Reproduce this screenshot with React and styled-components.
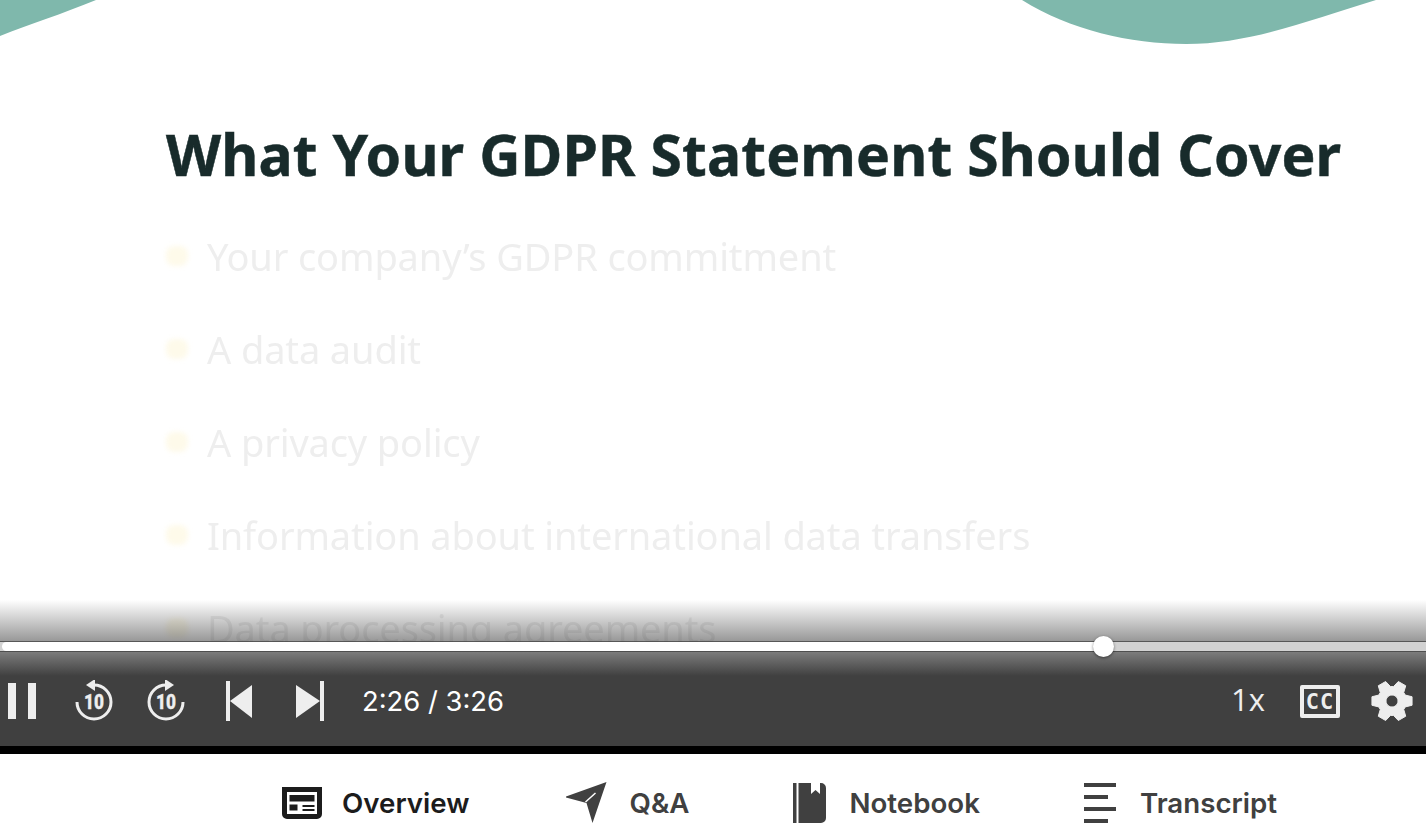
import styled, { createGlobalStyle } from "styled-components";

const GlobalStyle = createGlobalStyle`
  html, body {
    margin: 0;
    padding: 0;
    background: #fff;
    overflow: hidden;
  }
  * {
    box-sizing: border-box;
  }
`;

const Page = styled.div`
  width: 1426px;
  height: 832px;
  display: flex;
  flex-direction: column;
  overflow: hidden;
  font-family: Inter, "Liberation Sans", sans-serif;
`;

const Player = styled.div`
  position: relative;
  height: 746px;
  flex-shrink: 0;
  overflow: hidden;
  background: #fff;
`;

const Wave = styled.svg`
  position: absolute;
  top: 0;
  left: 0;
  pointer-events: none;
`;

const Slide = styled.div`
  padding: 119px 0 0 166px;
  filter: blur(0.7px);
`;

const SlideTitle = styled.h1`
  margin: 0 0 41px;
  font-family: "Noto Sans", sans-serif;
  font-size: 57px;
  line-height: 70px;
  font-weight: 700;
  letter-spacing: 0.15px;
  color: #182b2b;
  white-space: nowrap;
  -webkit-text-stroke: 0.5px #182b2b;
`;

const BulletList = styled.ul`
  margin: 0;
  padding: 0;
  list-style: none;
  display: flex;
  flex-direction: column;
  gap: 41px;
  filter: blur(0.5px);
`;

const Bullet = styled.li`
  display: flex;
  align-items: center;
  gap: 19px;
  height: 52px;
  font-family: "Noto Sans", sans-serif;
  font-size: 38px;
  letter-spacing: -0.13px;
  color: #eeeeee;
  white-space: nowrap;

  &::before {
    content: "";
    width: 22px;
    height: 20px;
    border-radius: 8px;
    background: #fefaea;
    filter: blur(2.5px);
  }
`;

const Overlay = styled.div`
  position: absolute;
  left: 0;
  right: 0;
  bottom: 0;
  height: 146px;
  display: flex;
  flex-direction: column;
  background: linear-gradient(to bottom, rgba(64, 64, 64, 0) 0, #404040 76px);
`;

const Progress = styled.div`
  position: relative;
  height: 9px;
  margin-top: 42px;
  margin-bottom: 5px;
  background: #d2d2d2;
  box-shadow: 0 0 0 1px rgba(60, 60, 60, 0.7);
`;

const ProgressFill = styled.div`
  height: 100%;
  margin-left: 2px;
  width: ${(p) => p.$value}px;
  background: #fff;
  border-radius: 5px 0 0 5px;
`;

const Thumb = styled.div`
  position: absolute;
  top: -6px;
  left: ${(p) => p.$value - 10}px;
  width: 21px;
  height: 21px;
  border-radius: 50%;
  background: #fff;
  box-shadow: 0 1px 3px rgba(0, 0, 0, 0.5);
`;

const ControlRow = styled.div`
  height: 90px;
  display: flex;
  align-items: center;
  justify-content: space-between;
  padding-right: 12px;
`;

const ControlGroup = styled.div`
  display: flex;
  align-items: center;
  gap: 28px;
`;

const ControlSlot = styled.div`
  width: 44px;
  height: 44px;
  display: flex;
  align-items: center;
  justify-content: center;
  color: #eeeeee;
  flex-shrink: 0;
`;

const TimeLabel = styled.span`
  margin-left: 2px;
  font-size: 27.4px;
  color: #fff;
  white-space: nowrap;
`;

const SpeedLabel = styled.span`
  padding-bottom: 5px;
  font-family: "Open Sans", sans-serif;
  font-size: 31px;
  color: #eeeeee;
`;

const CcBadge = styled.span`
  width: 40px;
  height: 33px;
  flex-shrink: 0;
  display: flex;
  align-items: center;
  justify-content: center;
  border: 4px solid #eeeeee;
  border-radius: 2px;
  font-family: "DejaVu Sans Mono", monospace;
  font-size: 22px;
  font-weight: 700;
  letter-spacing: 1px;
  color: #eeeeee;
`;

const BlackStrip = styled.div`
  height: 8px;
  flex-shrink: 0;
  background: #000;
`;

const TabRow = styled.nav`
  flex: 1;
  display: flex;
  align-items: center;
  gap: 100px;
  padding: 20px 0 0 282px;
  background: #fff;
`;

const Tab = styled.div`
  display: flex;
  align-items: center;
  gap: 20px;
  font-size: 27.7px;
  font-weight: 600;
  white-space: nowrap;
  color: ${(p) => (p.$active ? "#1c1c1c" : "#404040")};
`;

const TabIcon = styled.div`
  width: 40px;
  height: 42px;
  display: flex;
  align-items: center;
  justify-content: center;
  flex-shrink: 0;

  svg {
    flex-shrink: 0;
  }
`;

const PauseIcon = () => (
  <svg width="28" height="36" viewBox="0 0 28 36" fill="currentColor">
    <rect x="0" y="0" width="8" height="36" />
    <rect x="20" y="0" width="8" height="36" />
  </svg>
);

const SkipTenIcon = ({ forward }) => (
  <svg width="38" height="42" viewBox="0 1 38 42">
    <g transform={forward ? "translate(38 0) scale(-1 1)" : undefined}>
      <path
        d="M2 23a17 17 0 1 0 17-17"
        fill="none"
        stroke="currentColor"
        strokeWidth="3"
      />
      <path d="M20 0 L20 12 L11 6 Z" fill="currentColor" />
    </g>
    <text
      x="19"
      y="30"
      textAnchor="middle"
      fontFamily="'Roboto', sans-serif"
      fontWeight="900"
      fontSize="20"
      fill="currentColor"
      stroke="currentColor"
      strokeWidth="0.3"
      textLength="20"
      lengthAdjust="spacingAndGlyphs"
    >
      10
    </text>
  </svg>
);

const SkipPrevIcon = () => (
  <svg width="28" height="40" viewBox="0 0 28 40" fill="currentColor">
    <rect x="2" y="0" width="4" height="40" />
    <path d="M6 20 L28 4 L28 37 Z" />
  </svg>
);

const SkipNextIcon = () => (
  <svg width="28" height="40" viewBox="0 0 28 40" fill="currentColor">
    <rect x="24" y="0" width="4" height="40" />
    <path d="M24 20 L0 4 L0 37 Z" />
  </svg>
);

// six flat teeth around a round hole, first tooth pointing right
const gearPath = (() => {
  const rad = (deg) => (deg * Math.PI) / 180;
  const pt = (r, deg) =>
    `${(21 + r * Math.cos(rad(deg))).toFixed(2)} ${(21 + r * Math.sin(rad(deg))).toFixed(2)}`;
  let d = "";
  for (let i = 0; i < 6; i++) {
    const a = i * 60;
    d += `${i === 0 ? "M" : "L"}${pt(14.5, a - 24)} L${pt(20.5, a - 12)} L${pt(20.5, a + 12)} L${pt(14.5, a + 24)} `;
  }
  return `${d}Z M21 15 a6 6 0 1 0 0.01 0 Z`;
})();

const GearIcon = () => (
  <svg width="42" height="42" viewBox="0 0 42 42" fill="currentColor">
    <path d={gearPath} fillRule="evenodd" strokeLinejoin="round" stroke="currentColor" strokeWidth="1" />
  </svg>
);

const OverviewIcon = () => (
  <svg width="40" height="32" viewBox="0 0 40 32" fill="currentColor">
    <path d="M0 0 H40 V27 a5 5 0 0 1 -5 5 H5 a5 5 0 0 1 -5 -5 Z M5 5 V27 H35 V5 Z" fillRule="evenodd" />
    <rect x="7.5" y="8" width="25" height="6.5" />
    <rect x="7.5" y="17.5" width="8" height="6" />
    <rect x="20.5" y="18" width="12" height="2" />
    <rect x="20.5" y="22" width="12" height="2" />
  </svg>
);

const PlaneIcon = () => (
  <svg width="48" height="42" viewBox="1.5 0 48 42">
    <path d="M0 15 L42 0 L28 41 L22 21 Z" fill="currentColor" />
    <path d="M21 20 L31 11" stroke="#fff" strokeWidth="1.5" />
  </svg>
);

const NotebookIcon = () => (
  <svg width="33" height="40" viewBox="0 0 33 40" fill="currentColor">
    <rect x="0" y="0" width="3.5" height="40" />
    <path d="M5.5 0 H18 V11 L22.5 7 L27 11 V0 H28 a5 5 0 0 1 5 5 V35 a5 5 0 0 1 -5 5 H5.5 Z" />
  </svg>
);

const TranscriptIcon = () => (
  <svg width="32" height="40" viewBox="0 0 32 40" fill="currentColor">
    <rect x="0" y="0" width="32" height="4" />
    <rect x="0" y="12" width="24" height="4" />
    <rect x="0" y="24" width="32" height="4" />
    <rect x="0" y="36" width="24" height="4" />
  </svg>
);

const bullets = [
  "Your company’s GDPR commitment",
  "A data audit",
  "A privacy policy",
  "Information about international data transfers",
  "Data processing agreements",
];

const tabs = [
  { label: "Overview", icon: <OverviewIcon />, active: true },
  { label: "Q&A", icon: <PlaneIcon /> },
  { label: "Notebook", icon: <NotebookIcon /> },
  { label: "Transcript", icon: <TranscriptIcon /> },
];

export default function App() {
  return (
    <Page>
      <GlobalStyle />
      <Player>
        <Wave width="1426" height="60" viewBox="0 0 1426 60">
          <path d="M0 0 H96 C62 14 30 24 0 36 Z" fill="#7fb8ac" />
          <path
            d="M1022 0 C1070 30 1130 44 1186 44 C1250 44 1310 20 1376 0 Z"
            fill="#7fb8ac"
          />
        </Wave>
        <Slide>
          <SlideTitle>What Your GDPR Statement Should Cover</SlideTitle>
          <BulletList>
            {bullets.map((text) => (
              <Bullet key={text}>{text}</Bullet>
            ))}
          </BulletList>
        </Slide>
        <Overlay>
          <Progress>
            <ProgressFill $value={1101} />
            <Thumb $value={1103} />
          </Progress>
          <ControlRow>
            <ControlGroup>
              <ControlSlot><PauseIcon /></ControlSlot>
              <ControlSlot><SkipTenIcon /></ControlSlot>
              <ControlSlot><SkipTenIcon forward /></ControlSlot>
              <ControlSlot><SkipPrevIcon /></ControlSlot>
              <ControlSlot><SkipNextIcon /></ControlSlot>
              <TimeLabel>2:26 / 3:26</TimeLabel>
            </ControlGroup>
            <ControlGroup>
              <ControlSlot><SpeedLabel>1x</SpeedLabel></ControlSlot>
              <ControlSlot><CcBadge>CC</CcBadge></ControlSlot>
              <ControlSlot><GearIcon /></ControlSlot>
            </ControlGroup>
          </ControlRow>
        </Overlay>
      </Player>
      <BlackStrip />
      <TabRow>
        {tabs.map((tab) => (
          <Tab key={tab.label} $active={tab.active}>
            <TabIcon>{tab.icon}</TabIcon>
            {tab.label}
          </Tab>
        ))}
      </TabRow>
    </Page>
  );
}
